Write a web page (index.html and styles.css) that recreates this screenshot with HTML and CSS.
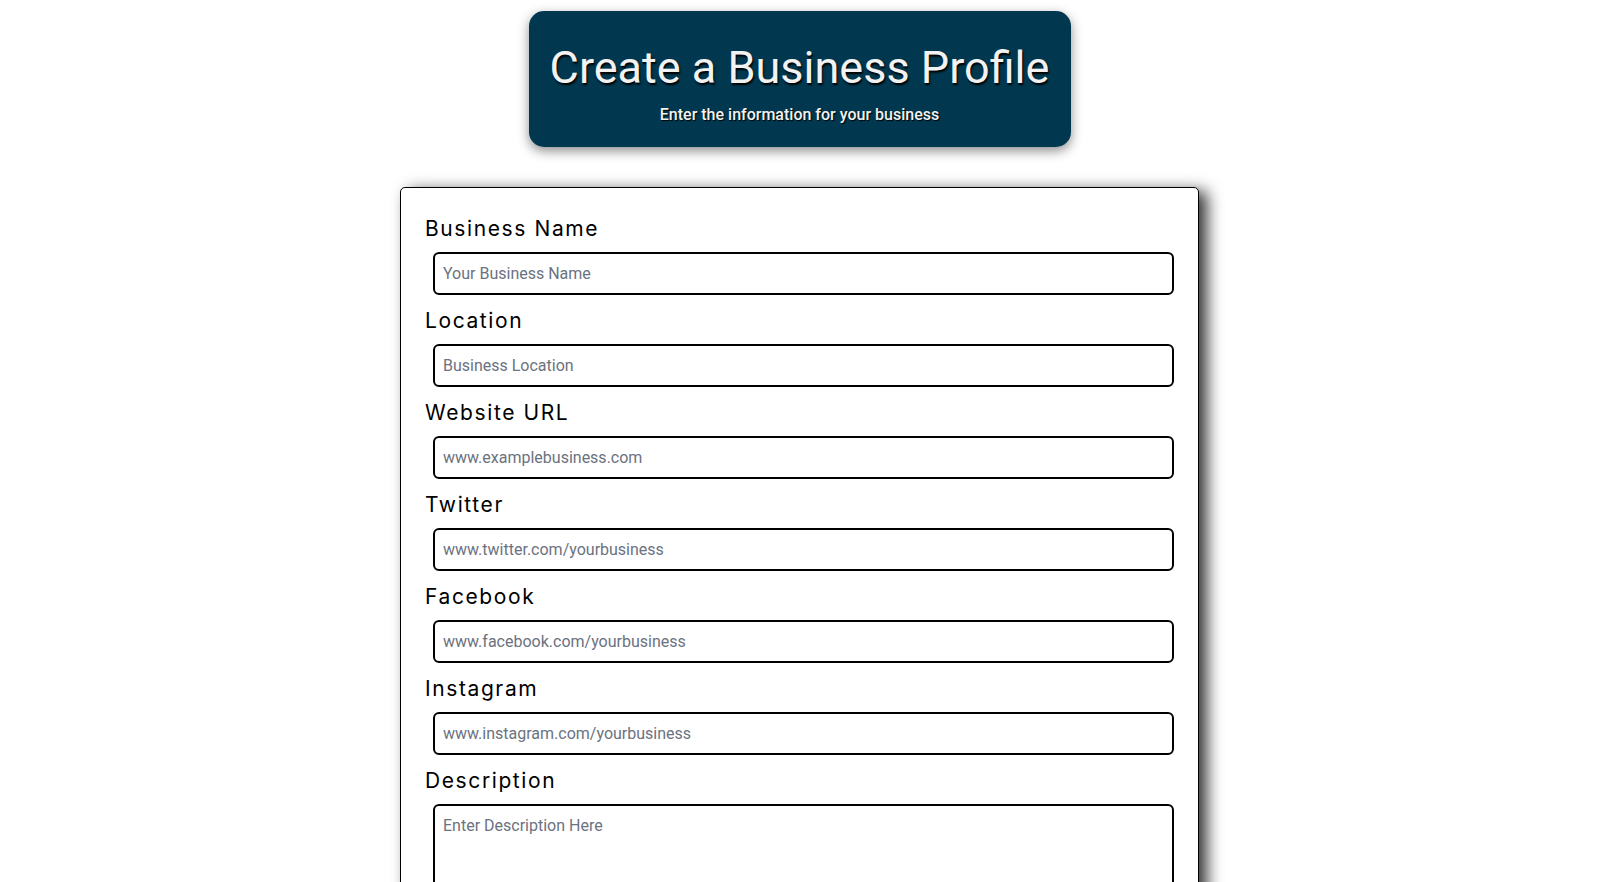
FILE: index.html
```html
<!DOCTYPE html>
<html>
<head>
    <meta charset="UTF-8">
    <title>Create a Business Profile</title>
    <link rel="stylesheet" href="styles.css">
</head>
<body>
    <div class="top">
        <div class="banner">
            <h1>Create a Business Profile</h1>
            <p>Enter the information for your business</p>
        </div>
    </div>

    <form class="card">
        <!-- Business fields -->
        <label for="name">Business Name</label>
        <input type="text" id="name" placeholder="Your Business Name">

        <label for="location">Location</label>
        <input type="text" id="location" placeholder="Business Location">

        <label for="website">Website URL</label>
        <input type="text" id="website" placeholder="www.examplebusiness.com">

        <label for="twitter">Twitter</label>
        <input type="text" id="twitter" placeholder="www.twitter.com/yourbusiness">

        <label for="facebook">Facebook</label>
        <input type="text" id="facebook" placeholder="www.facebook.com/yourbusiness">

        <label for="instagram">Instagram</label>
        <input type="text" id="instagram" placeholder="www.instagram.com/yourbusiness">

        <label for="description">Description</label>
        <textarea id="description" rows="6" placeholder="Enter Description Here"></textarea>
    </form>
</body>
</html>
```

FILE: styles.css
```css
/* Page */
body {
    margin: 0;
    background-color: #ffffff;
    font-family: Roboto, "Liberation Sans", sans-serif;
}

.top {
    display: flex;
    justify-content: center;
    padding-top: 11px;
}

.banner {
    width: 542px;
    height: 136px;
    box-sizing: border-box;
    background-color: #01384f;
    border-radius: 15px;
    box-shadow: 0 4px 12px rgba(0, 0, 0, 0.45);
    text-align: center;
    color: #f2f2f2;
    padding-top: 31px;
    white-space: nowrap;
}

.banner h1 {
    margin: 0;
    font-size: 45px;
    font-weight: 400;
    line-height: 52px;
    text-shadow: 1px 2px 2px #000000;
}

.banner p {
    margin: 11px 0 0 0;
    font-size: 16px;
    font-weight: 500;
    line-height: 20px;
    text-shadow: 1px 1px 1px #000000;
}

/* Form card */
.card {
    width: 799px;
    box-sizing: border-box;
    margin: 40px auto 0 auto;
    padding: 29px 24px 20px 24px;
    border: 1px solid #000000;
    border-radius: 5px;
    box-shadow: 8px 4px 16px rgba(0, 0, 0, 0.8);
    background-color: #ffffff;
}

.card label {
    display: block;
    font-family: Inter, "Liberation Sans", sans-serif;
    font-size: 21px;
    line-height: 24px;
    letter-spacing: 1.6px;
    color: #000000;
    margin-bottom: 11px;
}

.card input,
.card textarea {
    display: block;
    width: calc(100% - 8px);
    margin: 0 0 14px 8px;
    box-sizing: border-box;
    border: 2px solid #000000;
    border-radius: 6px;
    padding: 0 8px;
    font-family: Roboto, "Liberation Sans", sans-serif;
    font-size: 16px;
    color: #111111;
}

.card input {
    height: 43px;
}

.card textarea {
    height: 160px;
    padding-top: 10px;
    resize: none;
}

.card input::placeholder,
.card textarea::placeholder {
    color: #6b7280;
}
```
